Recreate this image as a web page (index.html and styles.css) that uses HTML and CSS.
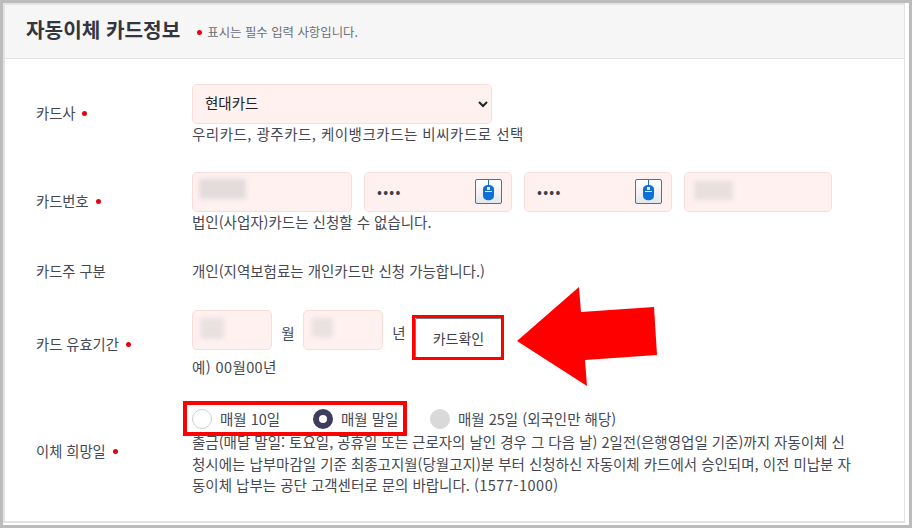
FILE: index.html
```html
<!DOCTYPE html>
<html lang="ko">
<head>
<meta charset="utf-8">
<title>자동이체 카드정보</title>
<link rel="stylesheet" href="styles.css">
</head>
<body>
<div class="frame">
  <section class="panel">
    <header class="head">
      <h1 class="title">자동이체 카드정보</h1>
      <p class="hint"><span class="dot"></span>표시는 필수 입력 사항입니다.</p>
    </header>
    <form class="body">
      <div class="row">
        <div class="label lift2">카드사<span class="dot"></span></div>
        <div class="cell">
          <select class="select"><option>현대카드</option></select>
          <p class="note wide">우리카드, 광주카드, 케이뱅크카드는 비씨카드로 선택</p>
        </div>
      </div>
      <div class="row">
        <div class="label lift2">카드번호<span class="dot"></span></div>
        <div class="cell">
          <div class="inputs">
            <div class="field w160"><input class="input" type="text"><span class="blur b1"></span></div>
            <div class="field w148"><input class="input pw" type="password" value="1234">
              <button class="mouse" type="button" aria-label="마우스 입력">
                <svg viewBox="0 0 27 25" width="27" height="25"><path d="M13.5 0v6" stroke="#1d6fb8" stroke-width="1" fill="none"/><path d="M13.5 6c3.3 0 5.500 1.500 5.500 4.500v6c0 3.200-2.300 4.800-5.500 4.800s-5.500-1.600-5.500-4.800v-6c0-3 2.200-4.500 5.500-4.500z" fill="#0f6fd6"/><rect x="12" y="8" width="3" height="3" fill="#dfeaf6"/><rect x="10" y="12" width="7" height="1" fill="#dfeaf6"/></svg>
              </button>
            </div>
            <div class="field w148"><input class="input pw" type="password" value="1234">
              <button class="mouse" type="button" aria-label="마우스 입력">
                <svg viewBox="0 0 27 25" width="27" height="25"><path d="M13.5 0v6" stroke="#1d6fb8" stroke-width="1" fill="none"/><path d="M13.5 6c3.3 0 5.500 1.500 5.500 4.500v6c0 3.200-2.300 4.800-5.500 4.800s-5.500-1.600-5.500-4.800v-6c0-3 2.200-4.500 5.500-4.500z" fill="#0f6fd6"/><rect x="12" y="8" width="3" height="3" fill="#dfeaf6"/><rect x="10" y="12" width="7" height="1" fill="#dfeaf6"/></svg>
              </button>
            </div>
            <div class="field w148"><input class="input" type="text"><span class="blur b2"></span></div>
          </div>
          <p class="note">법인(사업자)카드는 신청할 수 없습니다.</p>
        </div>
      </div>
      <div class="row">
        <div class="label lift1">카드주 구분</div>
        <div class="cell"><p class="note plain">개인(지역보험료는 개인카드만 신청 가능합니다.)</p></div>
      </div>
      <div class="row">
        <div class="label lift1">카드 유효기간<span class="dot"></span></div>
        <div class="cell">
          <div class="expiry">
            <div class="field w80"><input class="input" type="text"><span class="blur b3"></span></div>
            <span class="unit">월</span>
            <div class="field w80"><input class="input" type="text"><span class="blur b4"></span></div>
            <span class="unit">년</span>
            <button class="check" type="button">카드확인</button>
          </div>
          <p class="note ex">예) 00월00년</p>
        </div>
      </div>
      <div class="row">
        <div class="label">이체 희망일<span class="dot"></span></div>
        <div class="cell">
          <div class="radios">
            <span class="radio r1"><i class="circle"></i>매월 10일</span>
            <span class="radio r2"><i class="circle on"></i>매월 말일</span>
            <span class="radio r3"><i class="circle off"></i>매월 25일 (외국인만 해당)</span>
          </div>
          <p class="desc">출금(매달 말일: 토요일, 공휴일 또는 근로자의 날인 경우 그 다음 날) 2일전(은행영업일 기준)까지 자동이체 신<br>청시에는 납부마감일 기준 최종고지월(당월고지)분 부터 신청하신 자동이체 카드에서 승인되며, 이전 미납분 자<br>동이체 납부는 공단 고객센터로 문의 바랍니다. <span class="tel">(1577-1000)</span></p>
        </div>
      </div>
    </form>
  </section>
  <div class="mark mark-check"></div>
  <div class="mark mark-radio"></div>
  <svg class="arrow" viewBox="0 0 150 110" width="150" height="110"><polygon points="7,61 69,7 71,32 144,27 147,75 75,80 77,106" fill="#ff0000"/></svg>
</div>
</body>
</html>
```
FILE: styles.css
```css
* { box-sizing: border-box; }
html, body { margin: 0; padding: 0; }
body {
  width: 912px;
  height: 528px;
  overflow: hidden;
  background: #fff;
  color: #454852;
  font-family: "Noto Sans CJK KR", "Noto Sans", sans-serif;
  font-size: 14.500px;
}
.frame {
  position: relative;
  width: 912px;
  height: 528px;
  border: 3px solid #bcbcbc;
  padding: 0 4px 2px 0;
  background: #fff;
}
.panel {
  height: 100%;
  border: 2px solid #e2e2e2;
  border-width: 2px 1px 2px 2px;
}
.head {
  height: 54px;
  display: flex;
  align-items: center;
  padding: 0 0 2px 21px;
  background: #f6f6f6;
  border-bottom: 1px solid #e2e2e2;
}
.title {
  margin: 0;
  font-size: 20.200px;
  font-weight: 700;
  color: #33363f;
  line-height: 1;
  white-space: nowrap;
}
.hint {
  margin: 3px 0 0 17px;
  font-size: 12.400px;
  color: #6c7078;
  display: flex;
  align-items: center;
}
.dot {
  display: inline-block;
  width: 5px;
  height: 5px;
  border-radius: 50%;
  background: #e60012;
  margin: 0 5px 0 0;
}
.label .dot { margin: 0 0 3px 7px; vertical-align: middle; }
.body { padding: 25px 0 0 31px; }
.row {
  display: flex;
  align-items: center;
  margin-bottom: 27px;
}
.label { width: 156px; flex: none; font-size: 14.300px; white-space: nowrap; }
.lift2 { padding-bottom: 4px; }
.lift1 { padding-bottom: 2px; }
.cell { flex: 1; }
.select {
  display: block;
  width: 300px;
  height: 40px;
  padding: 0 8px 3px;
  background-color: #fff1f0;
  border: 1px solid #fbdcd8;
  border-radius: 5px;
  font: inherit;
  color: #222;
}
.note { margin: 0; height: 21px; line-height: 19px; white-space: nowrap; }
.note.wide { letter-spacing: 0.500px; }
.note.plain { height: 22px; line-height: 20px; }
.note.ex { height: 28px; line-height: 34px; letter-spacing: 0.400px; }
.inputs { display: flex; gap: 12px; }
.field { position: relative; height: 40px; flex: none; }
.w160 { width: 160px; }
.w148 { width: 148px; }
.w80 { width: 80px; }
.input {
  display: block;
  width: 100%;
  height: 100%;
  padding: 0 12px 3px;
  background: #fff1f0;
  border: 1px solid #fbdcd8;
  border-radius: 5px;
  font: inherit;
  color: #3c3f4a;
}
.input.pw { letter-spacing: 1.200px; }
.blur {
  position: absolute;
  background: #e4dcdc;
  filter: blur(2px);
}
.b1 { left: 7px; top: 7px; width: 47px; height: 20px; }
.b2 { left: 10px; top: 9px; width: 39px; height: 19px; background: #e9dfdf; }
.b3 { left: 8px; top: 8px; width: 24px; height: 21px; background: #e9e1e0; }
.b4 { left: 9px; top: 8px; width: 21px; height: 19px; background: #e9e1e0; }
.mouse {
  position: absolute;
  right: 10px;
  top: 7px;
  width: 27px;
  height: 25px;
  padding: 0;
  border: 1px solid #0f86c9;
  border-radius: 2px;
  background: linear-gradient(#fff, #e4e6e9);
  overflow: hidden;
}
.mouse svg { display: block; margin: -1px; }
.expiry { display: flex; align-items: flex-start; height: 40px; }
.unit { width: 31px; flex: none; text-align: center; padding: 13px 0 0 1px; line-height: 20px; }
.check {
  flex: none;
  width: 87px;
  height: 40px;
  margin: 8px 0 0 1px;
  background: #fff;
  border: 1px solid #6f7c88;
  border-radius: 2px;
  font: inherit;
  font-size: 14px;
  color: #3c3f4a;
}
.radios { display: flex; height: 26px; padding-top: 1px; align-items: center; }
.radio { display: flex; align-items: center; flex: none; white-space: nowrap; }
.r1 { width: 121px; }
.r2 { width: 117px; }
.circle {
  width: 20px;
  height: 20px;
  border-radius: 50%;
  border: 1px solid #cfcfcf;
  background: #fff;
  margin-right: 8px;
  flex: none;
}
.circle.on { border: 6px solid #3d3f5a; }
.circle.off { background: #d9d9d9; border-color: #d9d9d9; }
.desc { margin: 0; line-height: 21.500px; white-space: nowrap; }
.tel { letter-spacing: 0.500px; }
.mark { position: absolute; border: 3px solid #ff0000; }
.mark-check { left: 409px; top: 312px; width: 92px; height: 45px; }
.mark-radio { left: 180px; top: 398px; width: 224px; height: 35px; border-width: 4px; }
.arrow { position: absolute; left: 507px; top: 277px; }
```
